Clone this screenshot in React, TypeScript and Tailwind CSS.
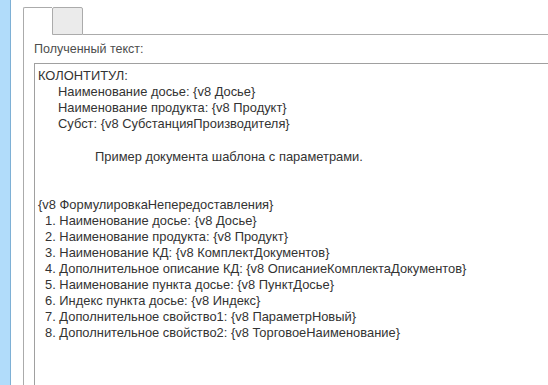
export default function App() {
  const header = [
    'Наименование досье: {v8 Досье}',
    'Наименование продукта: {v8 Продукт}',
    'Субст: {v8 СубстанцияПроизводителя}',
  ]
  const items = [
    '1. Наименование досье: {v8 Досье}',
    '2. Наименование продукта: {v8 Продукт}',
    '3. Наименование КД: {v8 КомплектДокументов}',
    '4. Дополнительное описание КД: {v8 ОписаниеКомплектаДокументов}',
    '5. Наименование пункта досье: {v8 ПунктДосье}',
    '6. Индекс пункта досье: {v8 Индекс}',
    '7. Дополнительное свойство1: {v8 ПараметрНовый}',
    '8. Дополнительное свойство2: {v8 ТорговоеНаименование}',
  ]

  return (
    <div className="flex w-[548px] h-[385px] overflow-hidden bg-white font-['Liberation_Sans',Arial,sans-serif]">
      {/* левая полоса */}
      <div className="w-[11px] shrink-0 bg-[#b1dcfa] border-r border-[#7eb0d5]" />

      <div className="flex-1 flex flex-col pl-[12px] pt-[7px] min-w-0">
        {/* вкладки */}
        <div className="flex h-[28px] shrink-0">
          <div className="w-[29px] border-l border-t border-[#ababab] rounded-tl-[2px] bg-white" />
          <div className="w-[31px] border border-[#ababab] rounded-t-[2px] bg-[#ebebeb]" />
          <div className="flex-1 border-b border-[#ababab]" />
        </div>

        {/* панель */}
        <div className="flex-1 flex flex-col border-l border-[#ababab] pl-[10px] min-h-0">
          <div className="mt-[7px] h-[15px] leading-[15px] text-[12.5px] text-[#4d4d4d]">Полученный текст:</div>
          <div className="mt-[6px] flex-1 border-l border-t border-[#a0a0a0] pl-[3px] pt-[4px] text-[12.9px] leading-[16px] text-[#333] whitespace-nowrap">
            <div>КОЛОНТИТУЛ:</div>
            {header.map((t) => (
              <div key={t} className="pl-[20px]">{t}</div>
            ))}
            <div className="h-[17px]" />
            <div className="pl-[57px]">Пример документа шаблона с параметрами.</div>
            <div className="h-[32px]" />
            <div>{'{v8 ФормулировкаНепередоставления}'}</div>
            {items.map((t) => (
              <div key={t} className="pl-[7px]">{t}</div>
            ))}
          </div>
        </div>
      </div>
    </div>
  )
}
